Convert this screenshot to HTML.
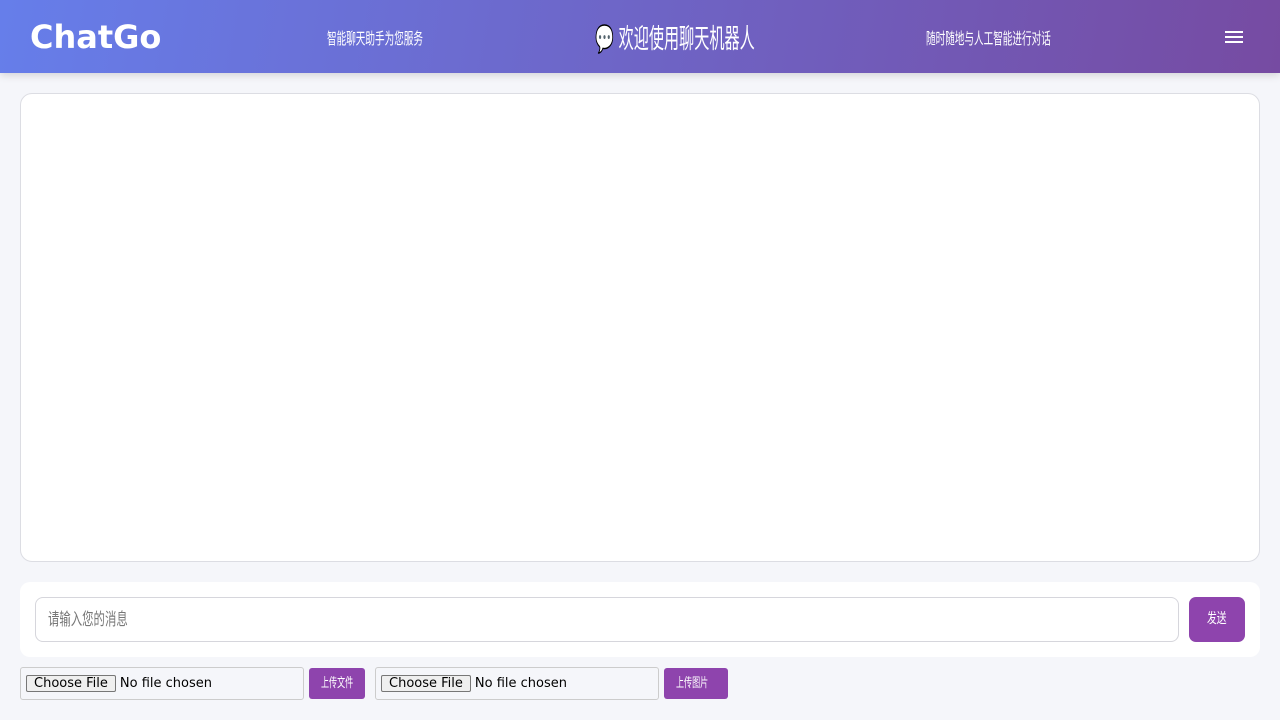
<!DOCTYPE html>
<html><head><meta charset="utf-8"><style>
*{box-sizing:border-box;margin:0;padding:0}
body{width:1280px;height:720px;background:#f5f6fa;font-family:"DejaVu Sans","Noto Sans CJK SC",sans-serif;overflow:hidden;position:relative}
.hdr{position:absolute;left:0;top:0;width:1280px;height:73px;background:linear-gradient(100deg,#667eea,#764ba2);box-shadow:0 2px 8px rgba(0,0,0,.15);color:#fff}
.logo{position:absolute;left:30px;top:18px;font-size:32px;font-weight:bold}
.s{display:inline-block;transform-origin:left center;white-space:nowrap}
.l{position:absolute;top:25px;font-size:16px}
.t{position:absolute;left:595px;top:17px;font-size:27px}
.menu{position:absolute;left:1225px;top:31px;width:18px}
.menu i{display:block;height:2px;background:#fff;margin-bottom:3px}
.chat{position:absolute;left:20px;top:93px;width:1240px;height:469px;background:#fff;border:1px solid #dcdde3;border-radius:12px}
.panel{position:absolute;left:20px;top:582px;width:1240px;height:75px;background:#fff;border-radius:10px}
.inp{position:absolute;left:15px;top:15px;width:1144px;height:45px;border:1px solid #d6d6dc;border-radius:8px;padding-left:12px;line-height:45px;font-size:17px;color:#777}
.send{position:absolute;left:1169px;top:15px;width:56px;height:45px;background:#8e44ad;border-radius:7px;color:#fff;font-size:14px;line-height:45px;padding-left:18px}
.f{position:absolute;top:667px;height:33px;width:284px;border:1px solid #ccc;border-radius:3px;background:#f5f6fa;font-size:13px;font-family:"DejaVu Sans",sans-serif;padding:8px 5px;line-height:16px}
.f span{border:1px solid #777;border-radius:2px;background:#efefef;padding:0 7px;margin-right:4px}
.b{position:absolute;top:668px;height:31px;background:#8e44ad;color:#fff;border-radius:3px;font-size:13px;line-height:31px;padding-left:12px}
</style></head><body>
<div class="hdr"><div class="logo">ChatGo</div>
<div class="l" style="left:327px"><span class="s" style="transform:scaleX(.6)">智能聊天助手为您服务</span></div>
<div class="t"><span class="s" style="transform:scaleX(.56)">💬 欢迎使用聊天机器人</span></div>
<div class="l" style="left:926px"><span class="s" style="transform:scaleX(.6)">随时随地与人工智能进行对话</span></div>
<div class="menu"><i></i><i></i><i></i></div></div>
<div class="chat"></div>
<div class="panel"><div class="inp"><span class="s" style="transform:scaleX(.67)">请输入您的消息</span></div><div class="send"><span class="s" style="transform:scaleX(.7)">发送</span></div></div>
<div class="f" style="left:20px"><span>Choose File</span>No file chosen</div>
<div class="b" style="left:309px;width:56px"><span class="s" style="transform:scaleX(.62)">上传文件</span></div>
<div class="f" style="left:375px"><span>Choose File</span>No file chosen</div>
<div class="b" style="left:664px;width:64px"><span class="s" style="transform:scaleX(.62)">上传图片</span></div>
</body></html>
